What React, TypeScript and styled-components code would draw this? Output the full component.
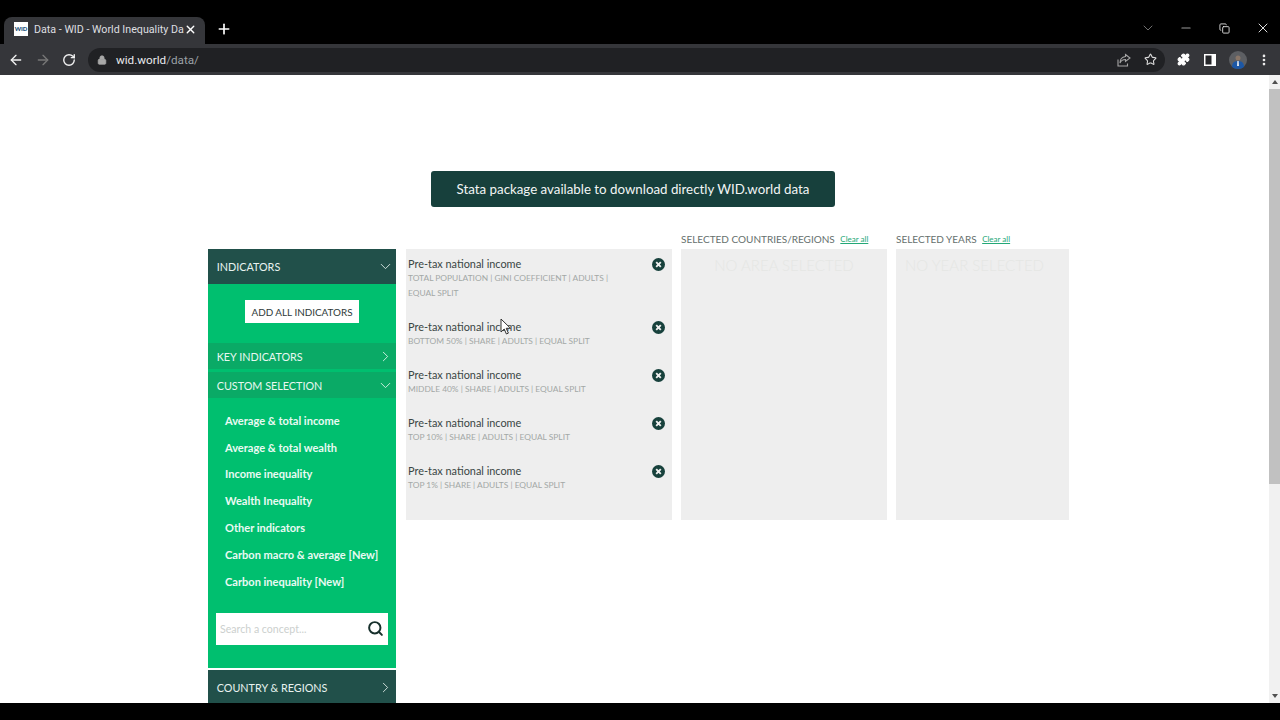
import React from "react";
import styled, { createGlobalStyle } from "styled-components";
import {
  ArrowLeft,
  ArrowRight,
  ChevronDown,
  ChevronRight,
  Copy,
  EllipsisVertical,
  Lock,
  Minus,
  Plus,
  Puzzle,
  RotateCw,
  Search,
  Star,
  X,
} from "lucide-react";

const GlobalStyle = createGlobalStyle`
  html, body {
    margin: 0;
    padding: 0;
    background: #000;
    overflow: hidden;
  }
  * {
    box-sizing: border-box;
  }
`;

const indicators = [
  { sub: "TOTAL POPULATION | GINI COEFFICIENT | ADULTS | EQUAL SPLIT", tall: true },
  { sub: "BOTTOM 50% | SHARE | ADULTS | EQUAL SPLIT" },
  { sub: "MIDDLE 40% | SHARE | ADULTS | EQUAL SPLIT" },
  { sub: "TOP 10% | SHARE | ADULTS | EQUAL SPLIT" },
  { sub: "TOP 1% | SHARE | ADULTS | EQUAL SPLIT" },
];

const customItems = [
  "Average & total income",
  "Average & total wealth",
  "Income inequality",
  "Wealth Inequality",
  "Other indicators",
  "Carbon macro & average [New]",
  "Carbon inequality [New]",
];

const CloseBadge = () => (
  <svg width="13" height="13" viewBox="0 0 13 13">
    <circle cx="6.5" cy="6.5" r="6.5" fill="#17413c" />
    <path d="M4.2 4.2l4.6 4.6M8.8 4.2l-4.6 4.6" stroke="#f0f0f0" strokeWidth="1.9" />
  </svg>
);

const ShareIcon = () => (
  <svg width="14" height="14" viewBox="0 0 14 14" fill="none" stroke="#a5a5a5" strokeWidth="1.1">
    <path d="M1 6.500v6.500h9.500v-2.500" />
    <path d="M8.500 1.500l4.500 3.500-4.500 3.500v-2c-2.500 0-4.500 1-5.500 3.500 0-3.500 2-6 5.500-6.500z" />
  </svg>
);

const SidePanelIcon = () => (
  <svg width="12" height="12" viewBox="0 0 12 12">
    <rect width="12" height="12" fill="#fff" />
    <rect x="1.500" y="1.500" width="6" height="9" fill="#26272a" />
  </svg>
);

const ProfilePhoto = () => (
  <svg width="18" height="18" viewBox="0 0 18 18">
    <circle cx="9" cy="9" r="9" fill="#5d5f63" />
    <path d="M3 16c0-4 2-6 6-6s6 2 6 6c-1.500 1.300-3.500 2-6 2s-4.500-.7-6-2z" fill="#1c57a5" />
    <circle cx="9" cy="7" r="2.500" fill="#8a7668" />
    <path d="M8.300 10h1.400l.3 5h-2z" fill="#dfe6ee" />
  </svg>
);

const App: React.FC = () => {
  return (
    <Screen>
      <GlobalStyle />
      <TabStrip>
        <Tab>
          <Favicon>WID</Favicon>
          <TabTitle>Data - WID - World Inequality Da</TabTitle>
          <X size={13} color="#fff" strokeWidth={2.5} />
        </Tab>
        <NewTab>
          <Plus size={16} color="#fff" strokeWidth={2.5} />
        </NewTab>
        <WindowControls>
          <ControlCell>
            <ChevronDown size={16} color="#777" strokeWidth={1.4} />
          </ControlCell>
          <ControlCell>
            <Minus size={14} color="#999" />
          </ControlCell>
          <ControlCell>
            <Copy size={11} color="#ddd" />
          </ControlCell>
          <ControlCell>
            <X size={16} color="#ddd" strokeWidth={1.5} />
          </ControlCell>
        </WindowControls>
      </TabStrip>
      <Toolbar>
        <NavIcons>
          <ArrowLeft size={16} color="#f1f1f1" />
          <ArrowRight size={16} color="#777" />
          <RotateCw size={14} color="#f1f1f1" strokeWidth={2.4} />
        </NavIcons>
        <Omnibox>
          <Lock size={10} color="#a8a8a8" fill="#a8a8a8" />
          <Url>
            wid.world<UrlPath>/data/</UrlPath>
          </Url>
          <OmniboxEnd>
            <ShareIcon />
            <Star size={13} color="#ddd" />
          </OmniboxEnd>
        </Omnibox>
        <ToolbarEnd>
          <Puzzle size={13} color="#fff" fill="#fff" />
          <SidePanelIcon />
          <ProfilePhoto />
          <EllipsisVertical size={14} color="#eee" strokeWidth={2.6} />
        </ToolbarEnd>
      </Toolbar>
      <Viewport>
        <Page>
          <BannerRow>
            <Banner>Stata package available to download directly WID.world data</Banner>
          </BannerRow>
          <Columns>
            <Sidebar>
              <DarkHeader>
                INDICATORS
                <ChevronDown size={17} strokeWidth={1.2} />
              </DarkHeader>
              <GreenPanel>
                <AddAllWrap>
                  <AddAll>ADD ALL INDICATORS</AddAll>
                </AddAllWrap>
                <SubHeader>
                  KEY INDICATORS
                  <ChevronRight size={17} strokeWidth={1.2} />
                </SubHeader>
                <SubHeader>
                  CUSTOM SELECTION
                  <ChevronDown size={17} strokeWidth={1.2} />
                </SubHeader>
                <CustomList>
                  {customItems.map((item) => (
                    <CustomItem key={item}>{item}</CustomItem>
                  ))}
                </CustomList>
                <SearchBox>
                  <SearchHint>Search a concept...</SearchHint>
                  <Search size={17} color="#17302c" strokeWidth={2.8} />
                </SearchBox>
              </GreenPanel>
              <CountryHeader>
                COUNTRY &amp; REGIONS
                <ChevronRight size={17} strokeWidth={1.2} />
              </CountryHeader>
            </Sidebar>
            <IndicatorBox>
              {indicators.map((row, index) => (
                <IndicatorRow key={index} $tall={row.tall}>
                  <div>
                    <IndicatorName>Pre-tax national income</IndicatorName>
                    <IndicatorSub>{row.sub}</IndicatorSub>
                  </div>
                  <BadgeSlot>
                    <CloseBadge />
                  </BadgeSlot>
                </IndicatorRow>
              ))}
              <Cursor width="12" height="17" viewBox="0 0 12 17">
                <path d="M1 1v13l3.2-3 2.2 5 2-.9-2.2-4.8H10.500z" fill="#fff" stroke="#333" strokeWidth="1" />
              </Cursor>
            </IndicatorBox>
            <SelectedColumn $width={206}>
              <SelectedLabel>
                SELECTED COUNTRIES/REGIONS <ClearAll>Clear all</ClearAll>
              </SelectedLabel>
              <SelectedBox>NO AREA SELECTED</SelectedBox>
            </SelectedColumn>
            <SelectedColumn $width={173}>
              <SelectedLabel>
                SELECTED YEARS <ClearAll>Clear all</ClearAll>
              </SelectedLabel>
              <SelectedBox $shift={16}>NO YEAR SELECTED</SelectedBox>
            </SelectedColumn>
          </Columns>
        </Page>
        <Scrollbar>
          <ScrollArrow />
          <ScrollThumb />
          <ScrollArrow $down />
        </Scrollbar>
      </Viewport>
      <BottomBar />
    </Screen>
  );
};

export default App;

const Screen = styled.div`
  width: 1280px;
  height: 720px;
  display: flex;
  flex-direction: column;
  overflow: hidden;
  background: #000;
  font-family: "Lato", "Liberation Sans", sans-serif;
`;

const TabStrip = styled.div`
  height: 44px;
  flex: none;
  display: flex;
  align-items: flex-end;
  padding-left: 4px;
  background: #000;
`;

const Tab = styled.div`
  width: 201px;
  height: 27px;
  padding: 0 8px 3px 10px;
  display: flex;
  align-items: center;
  background: #35363a;
  border-radius: 8px 8px 0 0;
`;

const Favicon = styled.div`
  width: 14px;
  height: 14px;
  margin-right: 6px;
  flex: none;
  background: #fff;
  color: #17507a;
  font-size: 6px;
  font-weight: 900;
  line-height: 14px;
  text-align: center;
  overflow: hidden;
`;

const TabTitle = styled.div`
  width: 146px;
  margin-right: 4px;
  flex: none;
  color: #dedfe0;
  font: 10.700px "Roboto", "Liberation Sans", sans-serif;
  white-space: nowrap;
`;

const NewTab = styled.div`
  width: 37px;
  height: 27px;
  padding-bottom: 3px;
  display: flex;
  align-items: center;
  justify-content: center;
`;

const WindowControls = styled.div`
  margin-left: auto;
  margin-right: -2.500px;
  height: 44px;
  padding: 20px 0 0 0;
  display: flex;
  align-items: flex-start;
`;

const ControlCell = styled.div`
  width: 38.500px;
  height: 16px;
  display: flex;
  align-items: center;
  justify-content: center;
`;

const Toolbar = styled.div`
  height: 31px;
  flex: none;
  display: flex;
  align-items: center;
  background: #35363a;
`;

const NavIcons = styled.div`
  width: 88px;
  padding-left: 8px;
  display: flex;
  align-items: center;
  gap: 11px;
`;

const Omnibox = styled.div`
  width: 1077px;
  height: 24px;
  padding: 0 8px 0 9px;
  display: flex;
  align-items: center;
  background: #202124;
  border-radius: 12px;
`;

const Url = styled.div`
  margin-left: 9px;
  color: #e8eaed;
  font: 11.700px "Roboto", "Liberation Sans", sans-serif;
`;

const UrlPath = styled.span`
  color: #9aa0a6;
`;

const OmniboxEnd = styled.div`
  margin-left: auto;
  display: flex;
  align-items: center;
  gap: 13px;
`;

const ToolbarEnd = styled.div`
  flex: 1;
  padding-left: 12px;
  display: flex;
  align-items: center;
  gap: 13px;
  & > svg:nth-child(1) {
    margin-right: 1px;
  }
  & > svg:nth-child(4) {
    margin-left: -3px;
  }
`;

const Viewport = styled.div`
  height: 628px;
  flex: none;
  display: flex;
  background: #fff;
  overflow: hidden;
`;

const Page = styled.div`
  flex: 1;
  min-width: 0;
  padding-top: 96px;
  background: #fff;
`;

const BannerRow = styled.div`
  padding-right: 3px;
  display: flex;
  justify-content: center;
`;

const Banner = styled.div`
  width: 404px;
  height: 36px;
  display: flex;
  align-items: center;
  justify-content: center;
  background: #17403c;
  border-radius: 3px;
  color: #f2f5f4;
  font-size: 13.300px;
`;

const Columns = styled.div`
  margin-top: 42px;
  padding-left: 208px;
  display: flex;
  align-items: flex-start;
`;

const Sidebar = styled.div`
  width: 188px;
  flex: none;
  margin-right: 10px;
`;

const DarkHeader = styled.div`
  height: 35px;
  padding: 0 2px 0 8.700px;
  display: flex;
  align-items: center;
  justify-content: space-between;
  background: #21504a;
  color: #e8f3f0;
  font-size: 10.800px;
`;

const CountryHeader = styled(DarkHeader)`
  margin-top: 2px;
`;

const GreenPanel = styled.div`
  height: 384px;
  background: #00bf6f;
`;

const AddAllWrap = styled.div`
  height: 59px;
  padding-top: 16px;
  display: flex;
  justify-content: center;
`;

const AddAll = styled.div`
  width: 114px;
  height: 23px;
  display: flex;
  align-items: center;
  justify-content: center;
  background: #fff;
  color: #2e3a38;
  font-size: 9.900px;
  white-space: nowrap;
`;

const SubHeader = styled.div`
  height: 26px;
  margin-bottom: 3px;
  padding: 0 2px 0 8.700px;
  display: flex;
  align-items: center;
  justify-content: space-between;
  background: #0aaa66;
  color: #e8f8f1;
  font-size: 10.800px;
`;

const CustomList = styled.div`
  padding: 6px 0 0 17px;
`;

const CustomItem = styled.div`
  height: 26.800px;
  display: flex;
  align-items: center;
  color: #eafaf3;
  font-size: 11.050px;
  font-weight: 700;
  white-space: nowrap;
`;

const SearchBox = styled.div`
  height: 32px;
  margin: 18px 8px 0;
  padding: 0 4px;
  display: flex;
  align-items: center;
  justify-content: space-between;
  background: #fff;
`;

const SearchHint = styled.span`
  color: #ccd0ce;
  font-size: 10.600px;
`;

const IndicatorBox = styled.div`
  position: relative;
  width: 266px;
  height: 271px;
  flex: none;
  margin-right: 9px;
  padding-top: 7px;
  background: #eeeeee;
`;

const IndicatorRow = styled.div<{ $tall?: boolean }>`
  height: ${(p) => (p.$tall ? "63px" : "48px")};
  padding: 0 7px 0 2px;
  display: flex;
  justify-content: space-between;
  align-items: flex-start;
`;

const IndicatorName = styled.div`
  height: 15px;
  color: #3a4644;
  font-size: 10.900px;
  line-height: 16px;
`;

const IndicatorSub = styled.div`
  width: 210px;
  color: #a3a8a6;
  font-size: 8.400px;
  line-height: 14.500px;
`;

const BadgeSlot = styled.div`
  padding-top: 2px;
  line-height: 0;
`;

const Cursor = styled.svg`
  position: absolute;
  top: 69px;
  left: 94px;
`;

const SelectedColumn = styled.div<{ $width: number }>`
  position: relative;
  width: ${(p) => p.$width}px;
  flex: none;
  margin-right: 9px;
`;

const SelectedLabel = styled.div`
  position: absolute;
  bottom: 100%;
  left: 0;
  padding-bottom: 4px;
  color: #66706d;
  font-size: 10px;
  line-height: 12px;
  white-space: nowrap;
`;

const ClearAll = styled.span`
  margin-left: 3px;
  color: #23a877;
  font-size: 8px;
  text-decoration: underline;
  vertical-align: 1px;
`;

const SelectedBox = styled.div<{ $shift?: number }>`
  height: 271px;
  padding: 7px ${(p) => p.$shift ?? 0}px 0 0;
  background: #eeeeee;
  color: #e5e6e4;
  font-size: 15px;
  font-weight: 300;
  line-height: 19px;
  text-align: center;
  white-space: nowrap;
`;

const Scrollbar = styled.div`
  width: 11px;
  flex: none;
  display: flex;
  flex-direction: column;
  background: #f1f1f1;
`;

const ScrollArrow = styled.div<{ $down?: boolean }>`
  height: 14px;
  flex: none;
  margin-top: ${(p) => (p.$down ? "auto" : "0")};
  display: flex;
  align-items: center;
  justify-content: center;
  &::after {
    content: "";
    border-left: 3.500px solid transparent;
    border-right: 3.500px solid transparent;
    ${(p) =>
      p.$down ? "border-top: 4px solid #505050;" : "border-bottom: 4px solid #505050;"}
  }
`;

const ScrollThumb = styled.div`
  height: 395px;
  background: #c1c1c1;
`;

const BottomBar = styled.div`
  flex: 1;
  background: #000;
`;
